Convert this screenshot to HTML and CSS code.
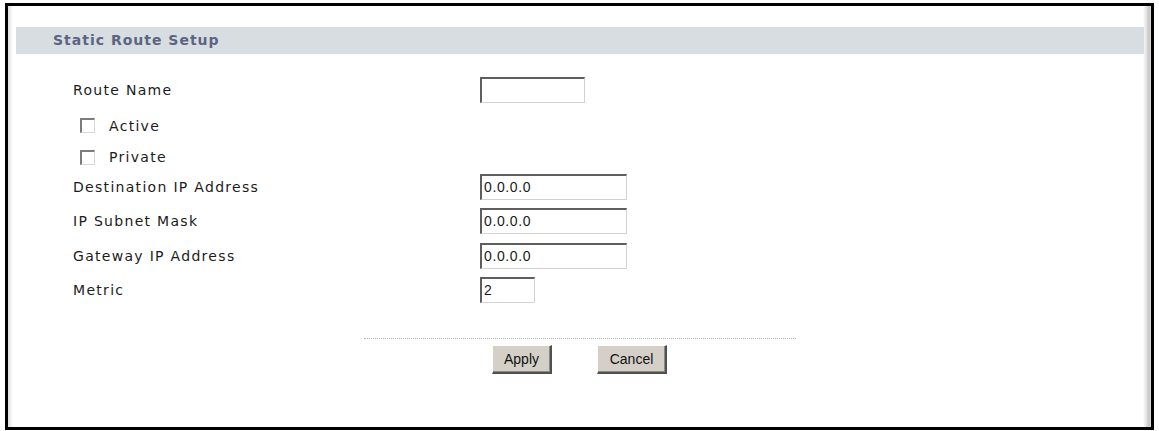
FILE: index.html
```html
<!DOCTYPE html>
<html>
<head>
<meta charset="utf-8">
<link rel="stylesheet" href="styles.css">
</head>
<body>
<div class="frame">
  <div class="section-head">Static Route Setup</div>
  <div class="form">
    <div class="label">Route Name</div>
    <div class="field"><span class="input w-name"></span></div>

    <div class="label check-row"><span class="checkbox"></span>Active</div>
    <div class="field"></div>

    <div class="label check-row"><span class="checkbox"></span>Private</div>
    <div class="field"></div>

    <div class="label">Destination IP Address</div>
    <div class="field"><span class="input w-ip">0.0.0.0</span></div>

    <div class="label">IP Subnet Mask</div>
    <div class="field"><span class="input w-ip">0.0.0.0</span></div>

    <div class="label">Gateway IP Address</div>
    <div class="field"><span class="input w-ip">0.0.0.0</span></div>

    <div class="label">Metric</div>
    <div class="field"><span class="input w-metric">2</span></div>
  </div>
  <div class="divider"></div>
  <div class="actions">
    <span class="btn btn-apply">Apply</span>
    <span class="btn btn-cancel">Cancel</span>
  </div>
</div>
</body>
</html>
```

FILE: styles.css
```css
html, body {
  margin: 0;
  padding: 0;
  background: #ffffff;
}

body {
  padding: 3px 0 1px 5px;
  font-family: "DejaVu Sans", Verdana, sans-serif;
}

.frame {
  box-sizing: border-box;
  width: 1149px;
  height: 427px;
  border: 3px solid #000000;
  background: linear-gradient(to right,
    #dedede 0px, #f2f2f2 3px, #ffffff 5px,
    #ffffff calc(100% - 8px), #e6e6e6 calc(100% - 5px), #c4c4c4 calc(100% - 2px), #e0e0e0 100%);
  padding-top: 21px;
}

.section-head {
  margin: 0 7px 0 8px;
  height: 27px;
  line-height: 27px;
  background: #d7dde0;
  color: #5b6582;
  font-weight: bold;
  font-size: 14px;
  letter-spacing: 1px;
  padding-left: 37px;
}

.form {
  display: grid;
  grid-template-columns: 407px auto;
  grid-template-rows: 36px 35px 28px 32px 36px 33px 36px;
  margin: 18px 0 0 65px;
  align-items: center;
}

.label {
  font-size: 14px;
  letter-spacing: 1.3px;
  color: #1c1c1c;
  white-space: nowrap;
}

.check-row {
  display: flex;
  align-items: center;
  padding-left: 7px;
}

.checkbox {
  box-sizing: border-box;
  width: 15px;
  height: 15px;
  border-top: 2px solid #7c7c7c;
  border-left: 2px solid #7c7c7c;
  border-right: 1px solid #d8d8d8;
  border-bottom: 1px solid #d8d8d8;
  background: #ffffff;
  margin-right: 14px;
}

.field {
  display: flex;
  align-items: center;
}

.input {
  box-sizing: border-box;
  display: block;
  height: 26px;
  border-top: 2px solid #5e5e5e;
  border-left: 2px solid #5e5e5e;
  border-right: 1px solid #d2d2d2;
  border-bottom: 1px solid #d2d2d2;
  background: #ffffff;
  font-family: "Liberation Sans", Arial, sans-serif;
  font-size: 14px;
  letter-spacing: 0.6px;
  line-height: 22px;
  padding-left: 2px;
  color: #1a1a1a;
}

.w-name {
  width: 105px;
}

.w-ip {
  width: 147px;
}

.w-metric {
  width: 55px;
}

.divider {
  width: 432px;
  margin: 30px auto 0;
  border-top: 1px dotted #b4b4b4;
}

.actions {
  display: flex;
  justify-content: center;
  gap: 45px;
  margin-top: 6px;
}

.btn {
  box-sizing: border-box;
  display: flex;
  align-items: center;
  justify-content: center;
  height: 29px;
  background: #d4d0c8;
  border-top: 1px solid #ffffff;
  border-left: 1px solid #ffffff;
  border-right: 2px solid #505050;
  border-bottom: 2px solid #505050;
  box-shadow: inset -1px -1px 0 #8a8a8a;
  font-family: "Liberation Sans", Arial, sans-serif;
  font-size: 14px;
  color: #111111;
}

.btn-apply {
  width: 60px;
}

.btn-cancel {
  width: 70px;
}
```
